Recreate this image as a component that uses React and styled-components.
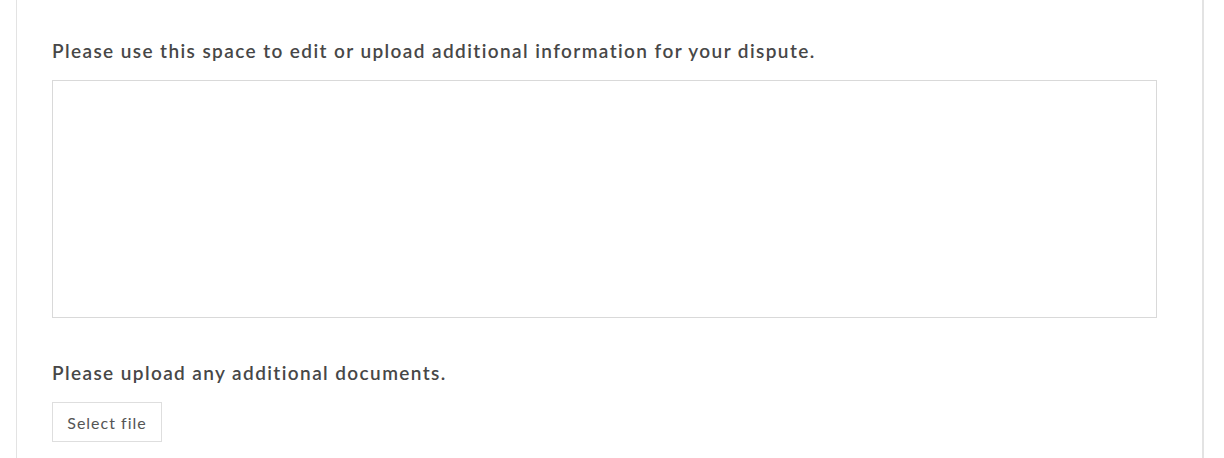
import React from 'react';
import styled, { createGlobalStyle } from 'styled-components';

const GlobalStyle = createGlobalStyle`
  html, body {
    margin: 0;
    padding: 0;
    background: #ffffff;
  }

  body {
    font-family: Lato, "Open Sans", sans-serif;
    color: #444444;
  }
`;

const Page = styled.div`
  height: 458px;
  padding: 0 20px 0 16px;
  overflow: hidden;
`;

const Panel = styled.div`
  height: 100%;
  box-sizing: border-box;
  border-left: 1px solid #e3e3e3;
  border-right: 2px solid #e3e3e3;
  padding: 40px 45px 0 35px;
`;

const Label = styled.label`
  display: block;
  font-size: 19px;
  font-weight: 600;
  letter-spacing: 1.4px;
  line-height: 22px;
  color: #474747;
  margin-bottom: 18px;
`;

const TextArea = styled.textarea`
  display: block;
  box-sizing: border-box;
  width: 100%;
  height: 238px;
  border: 1px solid #d9d9d9;
  border-radius: 0;
  resize: none;
  outline: none;
  margin: 0 0 44px;
`;

const FileButton = styled.button`
  box-sizing: border-box;
  width: 110px;
  height: 40px;
  padding: 0;
  background: #ffffff;
  border: 1px solid #dedede;
  border-radius: 0;
  font-family: Lato, "Open Sans", sans-serif;
  font-size: 16px;
  letter-spacing: 1px;
  color: #555555;
  cursor: pointer;
`;

const DisputeForm = () => (
  <Page>
    <GlobalStyle />
    <Panel>
      <Label htmlFor="info">Please use this space to edit or upload additional information for your dispute.</Label>
      <TextArea id="info" />
      <Label>Please upload any additional documents.</Label>
      <FileButton type="button">Select file</FileButton>
    </Panel>
  </Page>
);

export default DisputeForm;
